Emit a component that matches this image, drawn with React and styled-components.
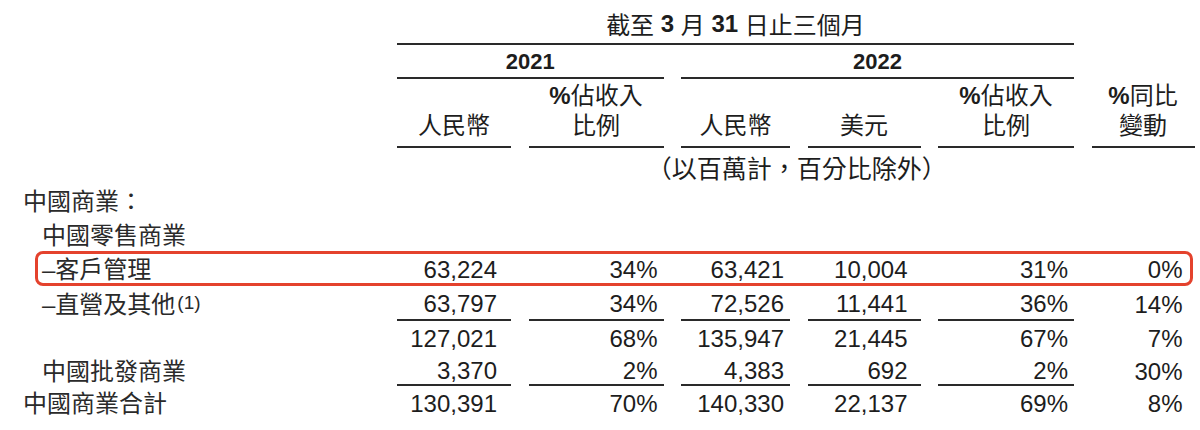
import React from "react";
import styled, { createGlobalStyle, css } from "styled-components";

const GlobalStyle = createGlobalStyle`
  body {
    margin: 0;
    background: #ffffff;
  }
`;

const FONT = `"Liberation Sans", "Noto Sans CJK TC", sans-serif`;
const RULE = "2px solid #2a2a2a";
// right padding of each number column, taken from the printed table
const PAD = [14, 6, 6, 13, 6, 12];

const StyleStatement = styled.div`
  width: 1200px;
  height: 430px;
  overflow: hidden;
  font-family: ${FONT};
  font-size: 24px;
  color: #1d1d1d;
  background: #fff;
`;

const Row = styled.div`
  position: relative;
  display: grid;
  grid-template-columns: 379.5px 114px 135px 109px 113px 136px 103px;
  grid-template-rows: ${(p) => p.$h}px;
  column-gap: 17.5px;
  height: ${(p) => p.$h}px;
  & > * {
    min-height: 0;
    box-sizing: border-box;
  }
  ${(p) =>
    p.$highlight &&
    css`
      &::after {
        content: "";
        position: absolute;
        left: 35px;
        right: 7px;
        top: -2px;
        bottom: 1px;
        border: 3px solid #e4422d;
        border-radius: 8px;
        pointer-events: none;
      }
    `}
`;

const Title = styled.div`
  grid-column: 2 / 7;
  display: flex;
  align-items: center;
  justify-content: center;
  padding-top: 4px;
  border-bottom: ${RULE};
  white-space: pre;
  b {
    font-weight: 700;
  }
`;

const Year = styled.div`
  grid-column: ${(p) => p.$span};
  display: flex;
  align-items: center;
  justify-content: center;
  padding-top: 2px;
  border-bottom: ${RULE};
  font-size: 22px;
  font-weight: 700;
`;

const Head = styled.div`
  display: flex;
  flex-direction: column;
  align-items: center;
  justify-content: flex-end;
  padding-bottom: 5px;
  line-height: 30px;
  border-bottom: ${RULE};
  white-space: nowrap;
  b {
    font-weight: 700;
  }
`;

const Note = styled.div`
  grid-column: 4 / 6;
  display: flex;
  align-items: center;
  justify-content: center;
  margin-right: 8px;
  font-size: 25px;
  white-space: nowrap;
`;

const Label = styled.div`
  display: flex;
  align-items: center;
  padding-left: ${(p) => (p.$level === 0 ? 23 : 42)}px;
  padding-top: ${(p) => p.$pt || 0}px;
  line-height: 34px;
  color: #2a2a2a;
  white-space: nowrap;
`;

const Sup = styled.span`
  font-size: 19px;
  line-height: 1;
  align-self: flex-start;
  margin-top: 4px;
  margin-left: 2px;
`;

const Num = styled.div`
  display: flex;
  align-items: center;
  justify-content: flex-end;
  padding-right: ${(p) => p.$pr}px;
  padding-top: ${(p) => p.$pt || 0}px;
  line-height: 34px;
  border-bottom: ${(p) => (p.$rule ? RULE : "none")};
  white-space: nowrap;
`;

const rows = [
  { label: "中國商業：", level: 0, h: 34 },
  { label: "中國零售商業", level: 1, h: 34 },
  {
    label: "–客戶管理",
    level: 1,
    h: 34,
    highlight: true,
    values: ["63,224", "34%", "63,421", "10,004", "31%", "0%"],
  },
  {
    label: "–直營及其他",
    sup: "(1)",
    level: 1,
    h: 34,
    pt: 2,
    rule: true,
    values: ["63,797", "34%", "72,526", "11,441", "36%", "14%"],
  },
  {
    label: "",
    level: 1,
    h: 36,
    values: ["127,021", "68%", "135,947", "21,445", "67%", "7%"],
  },
  {
    label: "中國批發商業",
    level: 1,
    h: 29,
    rule: true,
    values: ["3,370", "2%", "4,383", "692", "2%", "30%"],
  },
  {
    label: "中國商業合計",
    level: 0,
    h: 36,
    values: ["130,391", "70%", "140,330", "22,137", "69%", "8%"],
  },
];

const heads = [
  ["人民幣"],
  [<><b>%</b>佔收入</>, "比例"],
  ["人民幣"],
  ["美元"],
  [<><b>%</b>佔收入</>, "比例"],
  [<><b>%</b>同比</>, "變動"],
];

export default function App() {
  return (
    <>
      <GlobalStyle />
      <StyleStatement>
        <Row $h={45}>
          <div />
          <Title>
            截至 <b>3</b> 月 <b>31</b> 日止三個月
          </Title>
        </Row>
        <Row $h={34}>
          <div />
          <Year $span="2 / 4">2021</Year>
          <Year $span="4 / 7">2022</Year>
        </Row>
        <Row $h={69}>
          <div />
          {heads.map((lines, key) => (
            <Head key={key}>
              {lines.map((line, i) => (
                <span key={i}>{line}</span>
              ))}
            </Head>
          ))}
        </Row>
        <Row $h={37}>
          <div />
          <Note>（以百萬計，百分比除外）</Note>
        </Row>
        {rows.map((row, key) => (
          <Row $h={row.h} $highlight={row.highlight} key={key}>
            <Label $level={row.level} $pt={row.pt}>
              {row.label}
              {row.sup && <Sup>{row.sup}</Sup>}
            </Label>
            {row.values &&
              row.values.map((value, i) => (
                <Num
                  key={i}
                  $pr={PAD[i]}
                  $pt={row.pt}
                  $rule={row.rule && i < 5}
                >
                  {value}
                </Num>
              ))}
          </Row>
        ))}
      </StyleStatement>
    </>
  );
}
